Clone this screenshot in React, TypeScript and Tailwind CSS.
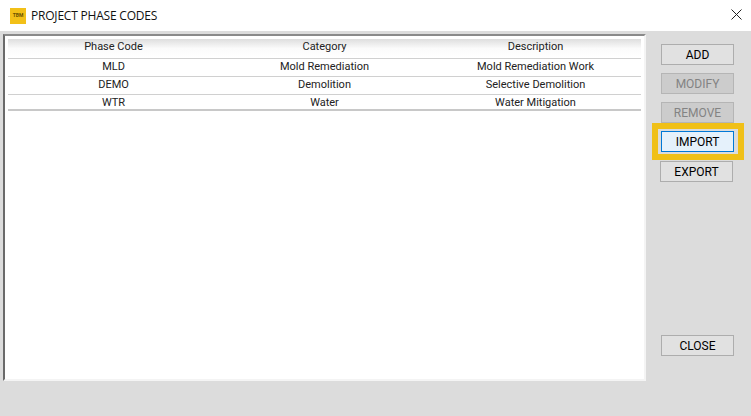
const rows = [
  ["MLD", "Mold Remediation", "Mold Remediation Work"],
  ["DEMO", "Demolition", "Selective Demolition"],
  ["WTR", "Water", "Water Mitigation"],
];

const Btn = ({ label, disabled }: { label: string; disabled?: boolean }) => (
  <div
    className={
      disabled
        ? "w-[73px] h-[21px] border border-[#b5b5b5] bg-[#cccccc] text-[#838383] flex items-center justify-center text-[12px]"
        : "w-[73px] h-[21px] border border-[#adadad] bg-[#e1e1e1] text-black flex items-center justify-center text-[12px]"
    }
  >
    {label}
  </div>
);

export default function App() {
  return (
    <div className="w-[751px] h-[416px] bg-[#dcdcdc] flex flex-col overflow-hidden font-['Roboto',sans-serif]">
      <div className="h-[31px] shrink-0 bg-white flex items-center pl-[10px] pr-[9px]">
        <div className="w-[16px] h-[16px] bg-[#f2c018] flex items-center justify-center text-[5px] font-bold text-[#6b5200]">
          TBM
        </div>
        <span className="ml-[5px] text-[12px] text-[#111111] font-['Open_Sans',sans-serif] tracking-[-0.2px]">
          PROJECT PHASE CODES
        </span>
        <svg className="ml-auto -mt-[2px]" width="11" height="11" viewBox="0 0 11 11">
          <path d="M0.5 0.5 L10.5 10.5 M10.5 0.5 L0.5 10.5" stroke="#222" strokeWidth="1" fill="none" />
        </svg>
      </div>

      <div className="flex flex-1 min-h-0">
        <div className="mt-[3px] ml-[3px] w-[643px] h-[347px] bg-white border-2 border-t-[#8a8a8a] border-l-[#6a6a6a] border-r-[#f4f4f4] border-b-[#f4f4f4] pt-[3px] px-[3px]">
          <div className="text-[11px] text-[#222222]">
            <div className="h-[20px] pb-[2px] grid grid-cols-3 items-center text-center border-b border-[#d0d0d0] bg-gradient-to-b from-[#dedede] via-[#fbfbfb] to-white">
              <span>Phase Code</span>
              <span>Category</span>
              <span>Description</span>
            </div>
            {rows.map((r, i) => (
              <div
                key={r[0]}
                className={
                  i === 2
                    ? "h-[16px] grid grid-cols-3 items-start text-center border-b-2 border-[#c8c8c8]"
                    : "h-[18px] pb-[3px] grid grid-cols-3 items-center text-center border-b border-[#d0d0d0]"
                }
              >
                <span>{r[0]}</span>
                <span>{r[1]}</span>
                <span>{r[2]}</span>
              </div>
            ))}
          </div>
        </div>

        <div className="ml-[15px] mt-[13px] flex flex-col w-[90px] h-[312px]">
          <div className="flex flex-col gap-2">
            <Btn label="ADD" />
            <Btn label="MODIFY" disabled />
            <Btn label="REMOVE" disabled />
          </div>
          <div className="-ml-[9px] w-[92px] h-[37px] border-[6px] border-[#f0c017] flex items-center pl-[3px]">
            <div className="w-[73px] h-[21px] border border-[#0078d7] bg-[#e5f1fb] text-black flex items-center justify-center text-[12px]">
              IMPORT
            </div>
          </div>
          <div className="-ml-px mt-px">
            <Btn label="EXPORT" />
          </div>
          <div className="mt-auto">
            <Btn label="CLOSE" />
          </div>
        </div>
      </div>
    </div>
  );
}
